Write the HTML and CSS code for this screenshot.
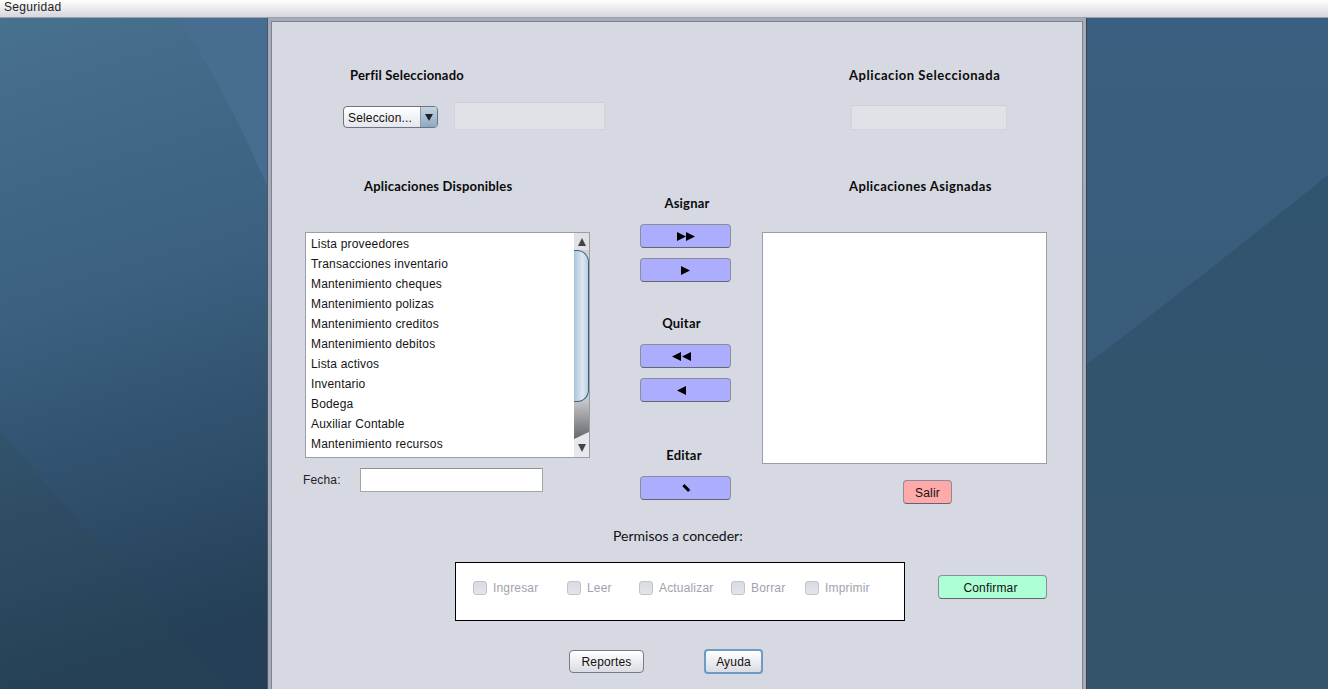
FILE: index.html
```html
<!DOCTYPE html>
<html lang="es">
<head>
    <meta charset="UTF-8">
    <meta name="viewport" content="width=device-width, initial-scale=1.0">
    <title>Seguridad</title>
    <link rel="stylesheet" href="styles.css">
</head>
<body>
    <div class="menubar"><span class="menu-item">Seguridad</span></div>

    <div class="desktop">
        <svg class="wallpaper" viewBox="0 0 1328 671" preserveAspectRatio="none">
            <defs>
                <linearGradient id="wallLeft" x1="0" y1="0" x2="0.12" y2="1">
                    <stop offset="0" stop-color="#48708f"/>
                    <stop offset="0.45" stop-color="#3b6080"/>
                    <stop offset="1" stop-color="#243f57"/>
                </linearGradient>
                <linearGradient id="wallRight" x1="0" y1="0" x2="0" y2="1">
                    <stop offset="0" stop-color="#3b5f80"/>
                    <stop offset="0.55" stop-color="#395c7a"/>
                </linearGradient>
                <linearGradient id="wallRightLow" x1="0" y1="0" x2="0" y2="1">
                    <stop offset="0" stop-color="#31546f"/>
                    <stop offset="1" stop-color="#34546b"/>
                </linearGradient>
            </defs>
            <rect x="0" y="0" width="1328" height="671" fill="url(#wallRight)"/>
            <rect x="0" y="0" width="268" height="671" fill="url(#wallLeft)"/>
            <path d="M178 0 Q226 72 268 170 L268 0 Z" fill="#476e90"/>
            <path d="M0 412 Q100 530 230 671 L0 671 Z" fill="#2f4a50" fill-opacity="0.22"/>
            <path d="M1086 347 Q1200 260 1328 157 L1328 671 L1086 671 Z" fill="url(#wallRightLow)"/>
        </svg>

        <div class="frame">
            <div class="panel">
                <div class="top">
                    <div class="profile">
                        <div class="title title-profile">Perfil Seleccionado</div>
                        <div class="profile-row">
                            <div class="combo">
                                <span class="combo-text">Seleccion...</span>
                                <span class="combo-arrow">
                                    <svg width="8" height="7" viewBox="0 0 8 7"><path d="M0 0H8L4 7Z" fill="#222"/></svg>
                                </span>
                            </div>
                            <div class="readonly readonly-profile"></div>
                        </div>
                    </div>
                    <div class="app">
                        <div class="title title-app">Aplicacion Seleccionada</div>
                        <div class="readonly readonly-app"></div>
                    </div>
                </div>

                <div class="main">
                    <div class="col-left">
                        <div class="title title-avail">Aplicaciones Disponibles</div>
                        <div class="listbox">
                            <ul class="list">
                                <li>Lista proveedores</li>
                                <li>Transacciones inventario</li>
                                <li>Mantenimiento cheques</li>
                                <li>Mantenimiento polizas</li>
                                <li>Mantenimiento creditos</li>
                                <li>Mantenimiento debitos</li>
                                <li>Lista activos</li>
                                <li>Inventario</li>
                                <li>Bodega</li>
                                <li>Auxiliar Contable</li>
                                <li>Mantenimiento recursos</li>
                            </ul>
                            <div class="scrollbar">
                                <div class="scroll-btn scroll-up">
                                    <svg width="8" height="8" viewBox="0 0 8 8"><path d="M4 0L8 8H0Z" fill="#444"/></svg>
                                </div>
                                <div class="scroll-track">
                                    <div class="scroll-thumb"></div>
                                </div>
                                <div class="scroll-btn scroll-down">
                                    <svg width="8" height="8" viewBox="0 0 8 8"><path d="M0 0H8L4 8Z" fill="#444"/></svg>
                                </div>
                            </div>
                        </div>
                        <div class="date-row">
                            <label class="date-label">Fecha:</label>
                            <div class="date-input"></div>
                        </div>
                    </div>

                    <div class="col-mid">
                        <div class="title title-assign">Asignar</div>
                        <button class="btn btn-blue btn-first">
                            <svg width="18" height="9" viewBox="0 0 18 9"><path d="M0 0L9 4.5L0 9ZM9 0L18 4.5L9 9Z" fill="#000"/></svg>
                        </button>
                        <button class="btn btn-blue btn-second">
                            <svg width="9" height="9" viewBox="0 0 9 9"><path d="M0 0L9 4.5L0 9Z" fill="#000"/></svg>
                        </button>
                        <div class="title title-remove">Quitar</div>
                        <button class="btn btn-blue btn-first btn-back">
                            <svg width="19" height="9" viewBox="0 0 19 9"><path d="M9 0L0 4.5L9 9ZM19 0L10 4.5L19 9Z" fill="#000"/></svg>
                        </button>
                        <button class="btn btn-blue btn-second btn-back">
                            <svg width="9" height="9" viewBox="0 0 9 9"><path d="M9 0L0 4.5L9 9Z" fill="#000"/></svg>
                        </button>
                        <div class="title title-edit">Editar</div>
                        <button class="btn btn-blue btn-first">
                            <svg width="10" height="10" viewBox="0 0 10 10">
                                <path d="M2.4 2.2L8.2 7.8" stroke="#000" stroke-width="3"/>
                                <path d="M8.6 6.6L9.6 7.6" stroke="#3a6fd0" stroke-width="1"/>
                            </svg>
                        </button>
                    </div>

                    <div class="col-right">
                        <div class="title title-assigned">Aplicaciones Asignadas</div>
                        <div class="assigned-list"></div>
                        <button class="btn btn-red">Salir</button>
                    </div>
                </div>

                <div class="permits">Permisos a conceder:</div>

                <div class="permits-row">
                    <div class="permits-box">
                        <label class="check check-ingresar"><span class="check-box"></span>Ingresar</label>
                        <label class="check check-leer"><span class="check-box"></span>Leer</label>
                        <label class="check check-actualizar"><span class="check-box"></span>Actualizar</label>
                        <label class="check check-borrar"><span class="check-box"></span>Borrar</label>
                        <label class="check"><span class="check-box"></span>Imprimir</label>
                    </div>
                    <button class="btn btn-green">Confirmar</button>
                </div>

                <div class="bottom">
                    <button class="btn btn-plain btn-reportes">Reportes</button>
                    <button class="btn btn-plain btn-ayuda">Ayuda</button>
                </div>
            </div>
        </div>
    </div>
</body>
</html>
```

FILE: styles.css
```css
html, body {
    margin: 0;
    padding: 0;
    height: 100%;
    overflow: hidden;
}

body {
    font-family: "Liberation Sans", Arial, sans-serif;
    font-size: 12px;
    letter-spacing: 0.17px;
    color: #000;
    display: flex;
    flex-direction: column;
}

.menubar {
    height: 17px;
    flex: none;
    border-bottom: 1px solid #9aa2ad;
    background: linear-gradient(to bottom, #ffffff, #f3f3f4 30%, #d5d7dc);
}

.menu-item {
    display: block;
    padding-left: 4px;
    line-height: 14px;
    letter-spacing: 0.3px;
    color: #222;
}

.desktop {
    flex: 1;
    position: relative;
    display: flex;
    overflow: hidden;
}

.wallpaper {
    position: absolute;
    left: 0;
    top: 0;
    width: 100%;
    height: 100%;
}

.frame {
    position: relative;
    width: 820px;
    margin-left: 267px;
    box-sizing: border-box;
    padding: 3px 3px 0 3px;
    background: #a5abb8;
    border-left: 1px solid #4e5561;
    border-right: 1px solid #3c4048;
}

.panel {
    height: 100%;
    box-sizing: border-box;
    background: #d6d9e2;
    border-top: 1px solid #7d8390;
    border-left: 1px solid #7d8390;
    border-right: 1px solid #7d8390;
}

.title {
    font-family: Lato, "Liberation Sans", sans-serif;
    font-weight: 700;
    font-size: 13px;
    line-height: 16px;
    letter-spacing: 0.2px;
    color: #0a0a0a;
}

.top {
    display: flex;
    height: 150px;
}

.profile {
    width: 577px;
    padding: 45px 0 0 71px;
    box-sizing: border-box;
}

.title-profile {
    margin-left: 7px;
}

.profile-row {
    display: flex;
    align-items: flex-start;
    margin-top: 19px;
}

.combo {
    width: 95px;
    height: 22px;
    margin-top: 4px;
    box-sizing: border-box;
    display: flex;
    border: 1px solid #6d7480;
    border-radius: 4px;
    overflow: hidden;
    background: linear-gradient(to bottom, #ffffff, #e3e6ec);
}

.combo-text {
    flex: 1;
    padding: 1px 0 0 4px;
    line-height: 20px;
    color: #111;
}

.combo-arrow {
    width: 16px;
    display: flex;
    align-items: center;
    justify-content: center;
    border-left: 1px solid #8c9aa8;
    background: linear-gradient(to bottom, #c5d4e2, #8fa9c2);
}

.readonly {
    box-sizing: border-box;
    background: #dfe2e7;
    border: 1px solid #d0d3da;
    border-top-color: #cdd0d7;
}

.readonly-profile {
    width: 151px;
    height: 28px;
    margin-left: 16px;
}

.app {
    padding-top: 45px;
}

.title-app {
    letter-spacing: 0.55px;
}

.readonly-app {
    width: 156px;
    height: 25px;
    margin: 22px 0 0 2px;
}

.main {
    display: grid;
    grid-template-columns: 368px 91px 1fr;
    height: 336px;
}

.col-left {
    padding-left: 33px;
}

.title-avail {
    margin: 6px 0 0 59px;
}

.listbox {
    width: 285px;
    height: 226px;
    box-sizing: border-box;
    margin-top: 38px;
    display: flex;
    background: #fff;
    border: 1px solid #9a9ea6;
}

.list {
    list-style: none;
    flex: 1;
    margin: 0;
    padding: 1px 0 0 5px;
}

.list li {
    height: 20px;
    line-height: 20px;
    color: #151515;
}

.scrollbar {
    width: 15px;
    display: flex;
    flex-direction: column;
    background: #d5d8df;
}

.scroll-btn {
    height: 17px;
    display: flex;
    align-items: center;
    justify-content: center;
    background: #dfe1e6;
    flex: none;
}

.scroll-down {
    height: 25px;
    margin-top: -7px;
    padding-top: 7px;
    box-sizing: border-box;
    background: #e6e8ec;
    clip-path: polygon(0 7px, 100% 0, 100% 100%, 0 100%);
}

.scroll-track {
    flex: 1;
    background: linear-gradient(to bottom, #d0d2d6 68%, #c4c5c8 80%, #66686b);
}

.scroll-thumb {
    height: 152px;
    box-sizing: border-box;
    border: 1px solid #3f5f7c;
    border-left: 0;
    border-radius: 0 12px 12px 0;
    background: linear-gradient(to right, #a9c4da, #dce8f1 60%, #b8cfe0);
}

.date-row {
    display: flex;
    align-items: center;
    margin-top: 10px;
    margin-left: -2px;
}

.date-label {
    width: 57px;
    color: #222;
}

.date-input {
    width: 183px;
    height: 24px;
    box-sizing: border-box;
    background: #fff;
    border: 1px solid #a2a5aa;
    border-top-color: #8c8f95;
}

.col-mid {
    display: flex;
    flex-direction: column;
    align-items: stretch;
}

.col-mid .title {
    text-align: center;
}

.title-assign {
    margin-top: 23px;
    padding-left: 3px;
}

.title-remove {
    margin-top: 33px;
    padding-right: 8px;
}

.title-edit {
    margin-top: 45px;
    padding-right: 3px;
}

.btn {
    font-family: "Liberation Sans", Arial, sans-serif;
    font-size: 12px;
    letter-spacing: 0.17px;
    color: #111;
    padding: 0;
    box-sizing: border-box;
    border: 1px solid #8a8e98;
    border-bottom-color: #62666f;
    border-radius: 4px;
    display: flex;
    align-items: center;
    justify-content: center;
}

.btn-blue {
    height: 24px;
    background: #adadff;
    flex: none;
}

.btn-first {
    margin-top: 13px;
}

.btn-second {
    margin-top: 10px;
}

.btn-back {
    padding-right: 8px;
}

.col-right {
    padding-left: 31px;
}

.title-assigned {
    margin: 6px 0 0 87px;
    letter-spacing: 0.4px;
}

.assigned-list {
    width: 285px;
    height: 232px;
    box-sizing: border-box;
    margin-top: 38px;
    background: #fff;
    border: 1px solid #9a9ea6;
}

.btn-red {
    width: 49px;
    height: 24px;
    margin: 16px 0 0 141px;
    padding-top: 1px;
    background: #ffa9a9;
}

.permits {
    padding-left: 341px;
    font-family: Lato, "Liberation Sans", sans-serif;
    font-size: 14px;
    line-height: 18px;
    letter-spacing: 0;
    margin-top: 19px;
    color: #111;
}

.permits-row {
    display: flex;
    align-items: center;
    margin-top: 17px;
    padding-left: 183px;
}

.permits-box {
    width: 450px;
    height: 59px;
    box-sizing: border-box;
    display: flex;
    align-items: center;
    padding: 0 0 8px 17px;
    background: #fff;
    border: 1px solid #000;
}

.check {
    display: flex;
    align-items: center;
    color: #9fa3ab;
}

.check-ingresar {
    width: 94px;
}

.check-leer {
    width: 72px;
}

.check-actualizar {
    width: 92px;
}

.check-borrar {
    width: 74px;
}

.check-box {
    width: 14px;
    height: 14px;
    box-sizing: border-box;
    margin-right: 6px;
    background: linear-gradient(to bottom, #d8dbe2, #e3e5ea);
    border: 1px solid #c1c4cb;
    border-radius: 3px;
}

.btn-green {
    width: 109px;
    height: 24px;
    margin: 0 0 9px 33px;
    padding: 1px 4px 0 0;
    background: #adffd6;
}

.bottom {
    display: flex;
    align-items: center;
    margin-top: 28px;
    padding-left: 297px;
}

.btn-plain {
    background: linear-gradient(to bottom, #ffffff, #d9dce3);
}

.btn-reportes {
    width: 75px;
    height: 23px;
    border-color: #777b84;
}

.btn-ayuda {
    width: 59px;
    height: 25px;
    margin-left: 60px;
    border: 2px solid #6f9ac4;
}
```
